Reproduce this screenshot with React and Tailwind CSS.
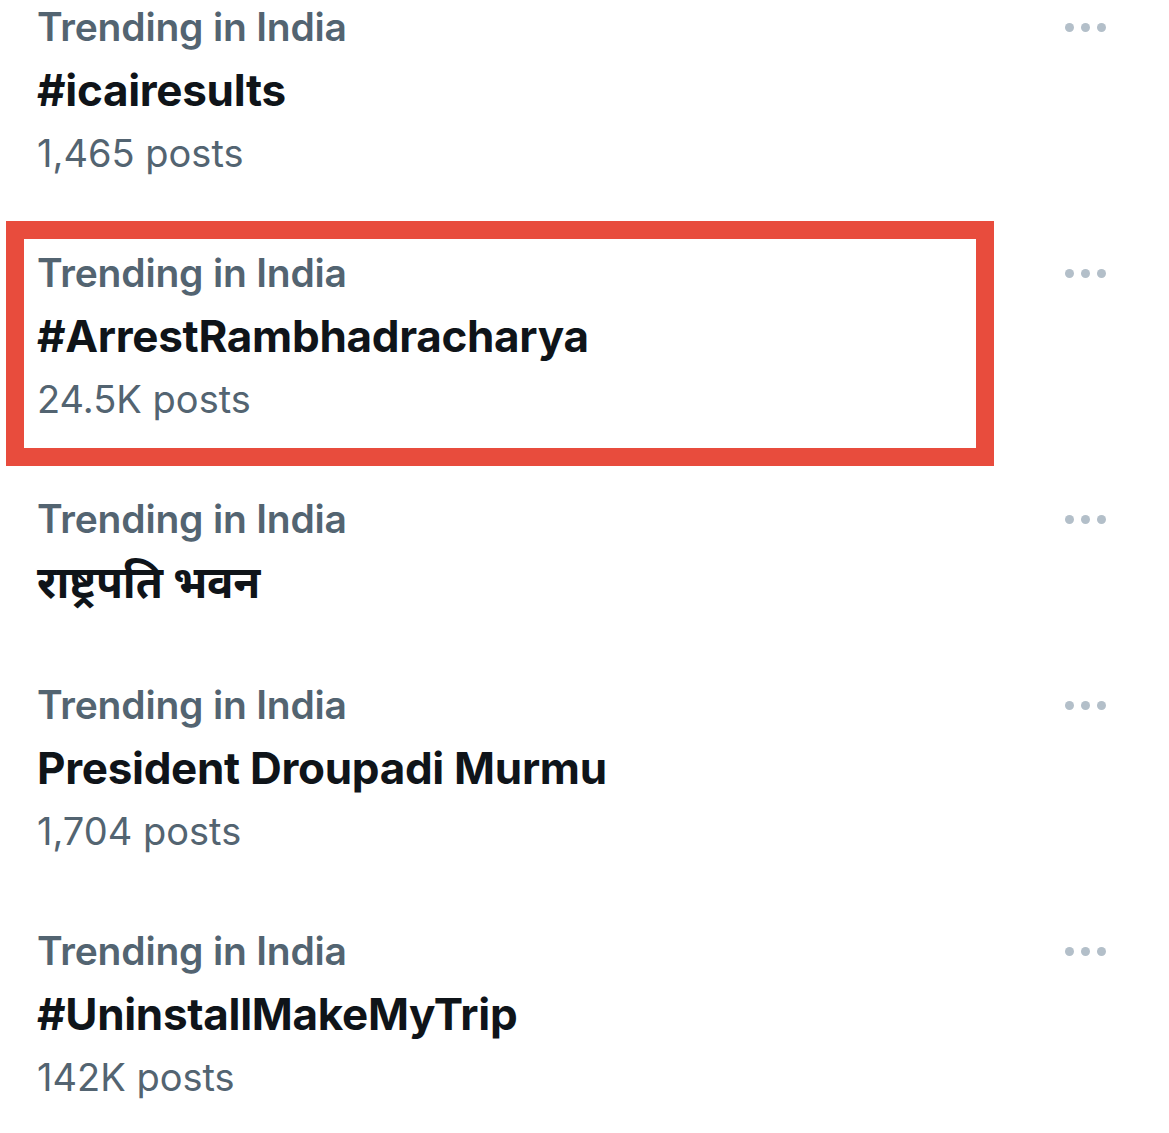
import React from 'react';

const trends = [
  { title: '#icairesults', posts: '1,465 posts' },
  { title: '#ArrestRambhadracharya', posts: '24.5K posts', marked: true },
  { title: 'राष्ट्रपति भवन' },
  { title: 'President Droupadi Murmu', posts: '1,704 posts' },
  { title: '#UninstallMakeMyTrip', posts: '142K posts' },
];

const MoreDots = () => (
  <div className="flex items-center gap-[7px] h-[60px]">
    <span className="w-[9px] h-[9px] rounded-full bg-[#b3bfc9]" />
    <span className="w-[9px] h-[9px] rounded-full bg-[#b3bfc9]" />
    <span className="w-[9px] h-[9px] rounded-full bg-[#b3bfc9]" />
  </div>
);

const TrendRow = ({ title, posts, marked }) => (
  <div className="relative flex items-start justify-between pl-[37px] pr-[63px] py-[30px]">
    {/* red annotation box drawn over the row */}
    {marked && (
      <span className="absolute left-[6px] top-[8px] w-[988px] h-[245px] border-[18px] border-[#e84c3d]" />
    )}
    <div className="flex flex-col">
      <span className="h-[60px] leading-[60px] text-[39px] font-semibold text-[#536471] tracking-[-0.2px]">
        Trending in India
      </span>
      <span className="h-[66px] leading-[66px] text-[44px] font-bold text-[#0f1419] tracking-[-0.3px]">
        {title}
      </span>
      {posts && (
        <span className="h-[60px] leading-[60px] text-[38px] font-normal text-[#536471]">
          {posts}
        </span>
      )}
    </div>
    <MoreDots />
  </div>
);

export default function App() {
  return (
    <div
      className="w-[1169px] h-[1133px] overflow-hidden bg-white"
      style={{ fontFamily: 'Inter, "Noto Sans Devanagari", "Noto Sans", sans-serif' }}
    >
      <div className="-mt-[33px] flex flex-col">
        {trends.map((t) => (
          <TrendRow key={t.title} {...t} />
        ))}
      </div>
    </div>
  );
}
